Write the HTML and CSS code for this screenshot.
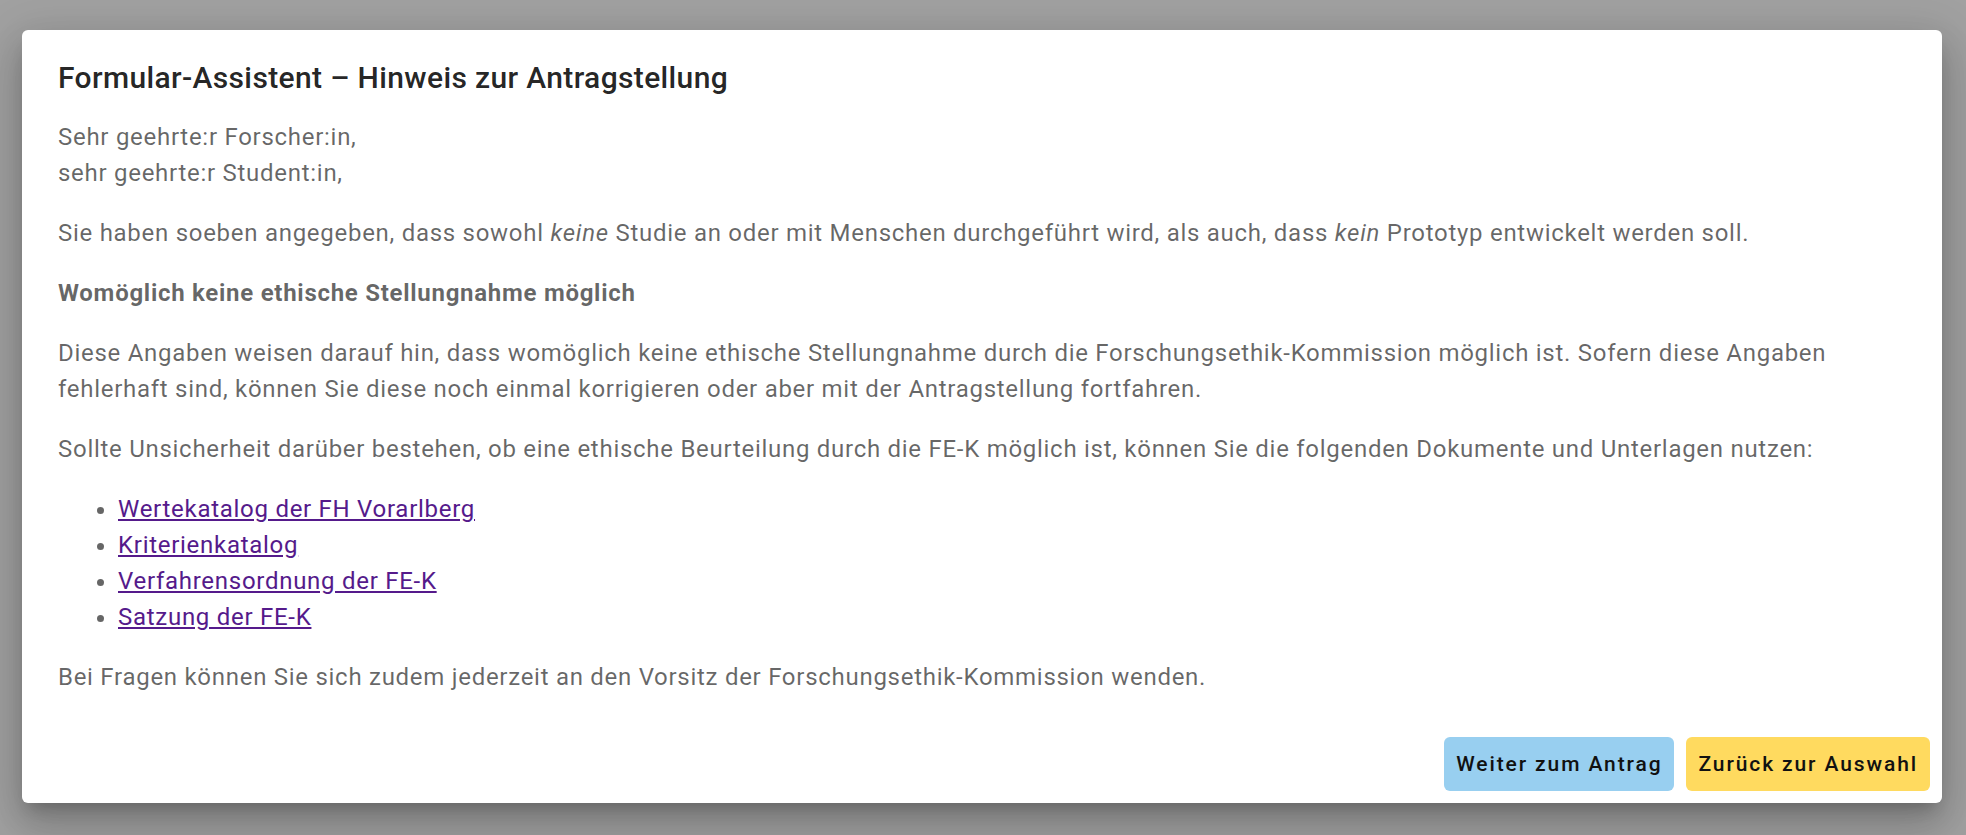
FILE: index.html
```html
<!DOCTYPE html>
<html lang="de">
<head>
<meta charset="utf-8">
<title>Formular-Assistent</title>
<link rel="stylesheet" href="styles.css">
</head>
<body>
<div class="backdrop">
  <div class="dialog" role="dialog">
    <h2 class="dialog-title">Formular-Assistent – Hinweis zur Antragstellung</h2>
    <div class="dialog-content">
      <p>Sehr geehrte:r Forscher:in,<br>sehr geehrte:r Student:in,</p>
      <p>Sie haben soeben angegeben, dass sowohl <em>keine</em> Studie an oder mit Menschen durchgeführt wird, als auch, dass <em>kein</em> Prototyp entwickelt werden soll.</p>
      <p class="strong">Womöglich keine ethische Stellungnahme möglich</p>
      <p>Diese Angaben weisen darauf hin, dass womöglich keine ethische Stellungnahme durch die Forschungsethik-Kommission möglich ist. Sofern diese Angaben fehlerhaft sind, können Sie diese noch einmal korrigieren oder aber mit der Antragstellung fortfahren.</p>
      <p>Sollte Unsicherheit darüber bestehen, ob eine ethische Beurteilung durch die FE-K möglich ist, können Sie die folgenden Dokumente und Unterlagen nutzen:</p>
      <ul class="doc-list">
        <li><a href="#">Wertekatalog der FH Vorarlberg</a></li>
        <li><a href="#">Kriterienkatalog</a></li>
        <li><a href="#">Verfahrensordnung der FE-K</a></li>
        <li><a href="#">Satzung der FE-K</a></li>
      </ul>
      <p>Bei Fragen können Sie sich zudem jederzeit an den Vorsitz der Forschungsethik-Kommission wenden.</p>
    </div>
    <div class="dialog-actions">
      <button class="btn btn-blue" type="button">Weiter zum Antrag</button>
      <button class="btn btn-yellow" type="button">Zurück zur Auswahl</button>
    </div>
  </div>
</div>
</body>
</html>
```

FILE: styles.css
```css
html, body {
  margin: 0;
  padding: 0;
  height: 100%;
}

body {
  background: #a1a1a1;
  font-family: Roboto, "Liberation Sans", Arial, sans-serif;
  overflow: hidden;
}

.backdrop {
  padding: 30px 24px 0 22px;
}

.dialog {
  background: #ffffff;
  border-radius: 6px;
  width: 1920px;
  display: flex;
  flex-direction: column;
  box-shadow:
    0px 11px 15px -7px rgba(0, 0, 0, 0.2),
    0px 24px 38px 3px rgba(0, 0, 0, 0.14),
    0px 9px 46px 8px rgba(0, 0, 0, 0.12);
}

.dialog-title {
  margin: 0;
  padding: 24px 36px 0;
  font-size: 30px;
  font-weight: 500;
  line-height: 48px;
  letter-spacing: 0.012em;
  color: rgba(0, 0, 0, 0.87);
}

.dialog-content {
  padding: 17px 36px 30px;
  color: rgba(0, 0, 0, 0.6);
  font-size: 24px;
  line-height: 36px;
  letter-spacing: 0.03em;
}

.dialog-content p {
  margin: 24px 0;
}

.dialog-content p:first-child {
  margin-top: 0;
}

.dialog-content p:last-child {
  margin-bottom: 0;
}

.dialog-content .strong {
  font-weight: 700;
}

.doc-list {
  margin: 24px 0;
  padding-left: 60px;
}

.doc-list a {
  color: #551a8b;
  text-decoration: underline;
}

.dialog-actions {
  display: flex;
  justify-content: flex-end;
  gap: 12px;
  padding: 12px;
}

.btn {
  border: 0;
  border-radius: 6px;
  padding: 9px 12px;
  font-family: Roboto, "Liberation Sans", Arial, sans-serif;
  font-size: 21px;
  font-weight: 500;
  line-height: 36px;
  letter-spacing: 0.09em;
  color: #111111;
  cursor: pointer;
}

.btn-blue {
  background: #98cff0;
}

.btn-yellow {
  background: #ffda5f;
}
```
